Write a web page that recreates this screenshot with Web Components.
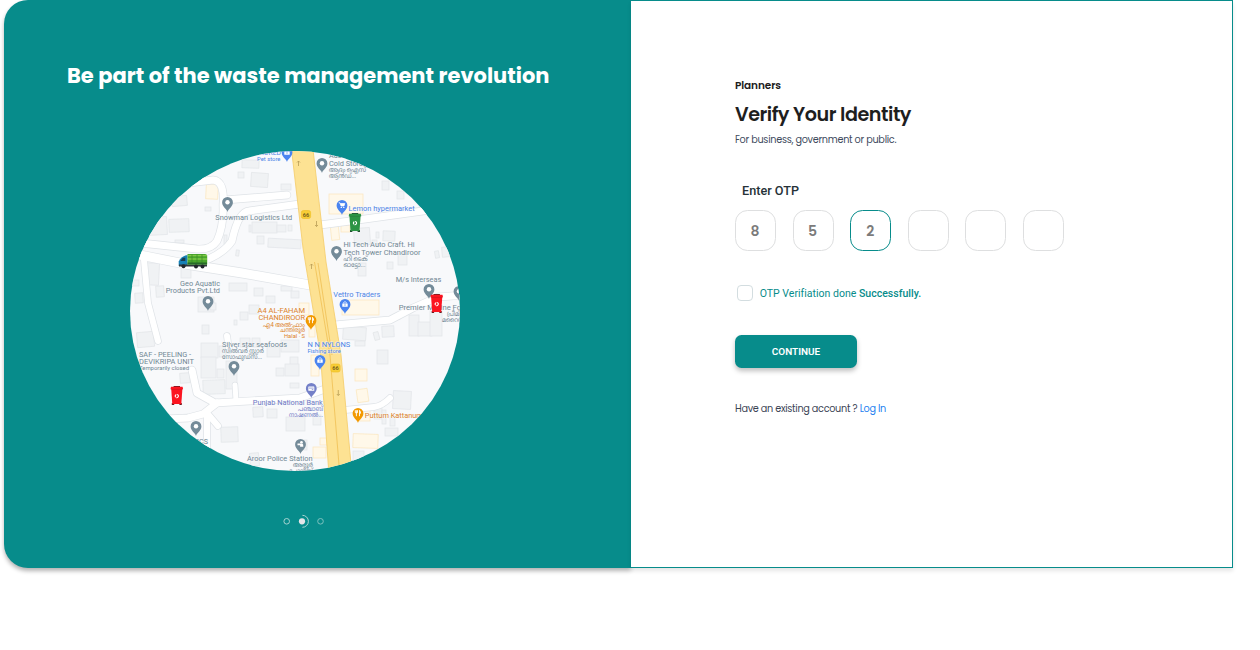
<!DOCTYPE html>
<html lang="en">
<head>
<meta charset="utf-8">
<title>Verify Your Identity</title>
<style>
body { margin: 0; background: #fff; font-family: Poppins, Inter, "Liberation Sans", sans-serif; }
</style>
</head>
<body>
<verify-page></verify-page>
<script>
const define = (name, html, setup) => {
  customElements.define(name, class extends HTMLElement {
    connectedCallback() {
      if (this.shadowRoot) return;
      const root = this.attachShadow({ mode: "open" });
      const t = document.createElement("template");
      t.innerHTML = typeof html === "function" ? html(this) : html;
      root.append(t.content.cloneNode(true));
      if (setup) setup(this, root);
    }
  });
};

/* A single line of text that fills a given width: by its size, or with the "track" attribute by letter-spacing only. */
define("fit-text", `<style>
  :host { display: block; white-space: nowrap; }
  span { display: inline-block; }
</style><span><slot></slot></span>`, (el, root) => {
  const s = root.querySelector("span");
  const target = +el.getAttribute("width");
  if (!el.hasAttribute("track")) {
    const size = parseFloat(getComputedStyle(s).fontSize);
    s.style.fontSize = (size * target / s.getBoundingClientRect().width).toFixed(2) + "px";
  }
  const n = el.textContent.length - 1;
  s.style.letterSpacing = ((target - s.getBoundingClientRect().width) / n).toFixed(3) + "px";
});

const roads = [
  ["M135 243L150 244L197 249Q211 250 217 241Q224 225 223 205Q225 181 213 180L180 184", 7],
  ["M225 200L287 195", 7],
  ["M195 264Q222 256 232 241Q238 212 249 211L300 204", 7],
  ["M135 254L145 256L185 264L242 273L310 285", 9],
  ["M320 225L365 219L430 210", 7],
  ["M335 325L390 320L413 308L438 297L465 295", 7],
  ["M144 260L148 303L158 341", 6],
  ["M192 370L197 393L215 403L300 398L325 389", 7],
  ["M165 419L188 418L203 414L217 403", 7],
  ["M207 412L207 450", 6],
  ["M207 413L218 426", 6],
  ["M235 385L236 401", 5],
  ["M345 410L374 407Q382 406 390 398", 6],
  ["M227 336L229 350", 6]
];
/* x, y, width, height, rotation */
const blocks = [
  [242,160,17,8,2],[238,172,6,6,0],[251,173,17,14,4],[281,184,10,6,0],[205,207,6,4,0],[172,196,15,10,-5],
  [169,219,20,13,-2],[145,217,22,18,-3],[175,240,9,3,0],[252,222,25,11,0],[277,225,9,7,0],[288,225,4,6,0],
  [257,236,7,8,0],[268,239,33,9,3],[224,235,3,10,0],[236,250,3,6,8],[249,225,2,7,0],
  [144,263,15,22,3],[181,268,10,10,0],[131,280,8,6,0],[135,293,8,10,-4],[156,286,8,11,-4],[198,297,16,15,0],[210,303,6,7,0],
  [229,283,18,8,0],[254,288,9,8,0],[266,296,9,7,0],[281,286,11,5,0],[291,291,8,7,0],[240,312,8,8,0],[249,305,10,9,0],[234,320,3,5,0],
  [202,325,7,9,0],[137,332,17,15,-5],[201,343,17,15,0],[219,346,7,11,0],[240,338,10,9,0],[252,338,8,9,0],[267,347,13,10,0],[281,340,18,12,0],[290,357,8,14,0],
  [180,373,10,10,-4],[201,357,15,21,0],[203,380,22,14,-2],[226,361,11,28,0],[217,369,7,9,0],[276,368,8,8,0],[285,364,14,12,0],[290,383,9,5,0],
  [253,407,10,10,-3],[267,409,10,9,0],[286,417,19,14,0],[221,427,17,15,-2],[250,453,9,13,-5],[313,415,8,10,0],[299,440,8,10,0],
  [382,181,7,9,0],[397,191,7,8,0],[383,231,12,10,2],[376,232,3,6,0],[354,228,16,17,-4],[372,240,5,6,0],[435,251,4,7,-10],[442,247,7,10,-5],
  [358,263,8,13,0],[398,254,9,11,0],[387,262,6,7,0],[343,327,23,13,4],[355,341,10,5,0],[374,332,5,8,-15],[382,326,12,11,-3],
  [377,350,11,14,0],[409,315,10,21,0],[418,322,14,14,0],[430,311,12,25,0],[393,391,18,18,3],[374,408,8,11,0],[382,410,4,14,0],[390,416,5,10,0],[385,428,13,8,0],[395,314,5,5,0],[353,451,11,10,0]
];
const shops = [
  [206,184,12,15,3],[329,194,34,20,0],[331,226,8,14,-6],[341,225,9,7,0],[351,223,8,6,0],[342,300,37,15,0],[299,303,10,12,0],
  [309,325,6,12,0],[311,355,8,21,0],[355,369,12,12,0],[357,389,11,13,-8],[353,434,25,14,2],[320,438,8,7,0],[313,447,13,11,0],[358,410,12,11,0]
];
/* x, y (tip), colour, glyph */
const S = "#748b99", B = "#4a84f0", O = "#f29900", P = "#7480c8";
const pins = [
  [227.5,212,S,"dot"],[322,173,S,"dot"],[336.5,261,S,"dot"],[208,311,S,"dot"],[429,299,S,"dot"],[459,301,S,"dot"],
  [234,376,S,"dot"],[196,436,S,"dot"],[300.5,454,S,"police"],[287,162,B,"bag"],[342,215,B,"cart"],[345,314,B,"bag"],
  [320,370,B,"bag"],[311,330,O,"fork"],[358,423,O,"fork"],[311.3,398,P,"bank"]
];
const glyph = {
  dot: `<circle cy="-9.7" r="2.2" fill="#fff"/>`,
  bag: `<path d="M-2.7 -10.6H2.7V-7.2H-2.7Z" fill="#fff"/><path d="M-1.4 -10.6V-11.5Q0 -13.2 1.4 -11.5V-10.6" fill="none" stroke="#fff" stroke-width=".8"/><path d="M-1 -9.3Q0 -8 1 -9.3" fill="none" stroke="#4a80e8" stroke-width=".6"/>`,
  cart: `<path d="M-3.3 -12.3H-2.2L-1 -9H2L2.8 -11.5H-1.8" fill="#fff" stroke="#fff" stroke-width=".7"/><circle cx="-.7" cy="-7.6" r=".7" fill="#fff"/><circle cx="1.8" cy="-7.6" r=".7" fill="#fff"/>`,
  fork: `<path d="M-1.6 -12.8V-6.8M-2.7 -12.8V-10.3H-.5V-12.8M1.5 -6.8V-12.7Q2.6 -12 2.6 -9.7H1.5" fill="none" stroke="#fff" stroke-width=".9"/>`,
  bank: `<rect x="-3" y="-11.6" width="6" height="4.4" rx=".5" fill="#fff"/><path d="M-2.4 -9.9H2.4M.5 -8.5H2" stroke="#7480c8" stroke-width=".7"/>`,
  police: `<circle cx="1" cy="-11.8" r="1.3" fill="#fff"/><path d="M-3 -10.4H1.8Q3 -10 2.8 -7.2H-.4V-8.8H-3Z" fill="#fff"/>`
};
const G = "#708793", BT = "#4c83e6", OT = "#dc8228", PT = "#6c78c4";
/* text, left, baseline, width, size, colour */
const labels = [
  ["SHORED",255,155,26,7.2,BT],["Pet store",257,160.5,23.5,5.9,BT],
  ["Snowman Logistics Ltd",215.3,220,77,7.6,G],
  ["Aadam Ice",329,158.3,34,7.6,G],["Cold Storage",329,165.5,42,7.6,G],["ആദം ഐസ്",329,172,37,6.8,G],["ആൻഡ്...",329,178,27,6.8,G],
  ["Lemon hypermarket",348.6,210.5,66,7.6,BT],
  ["Hi Tech Auto Craft. Hi",343.5,247,71,7.6,G],["Tech Tower Chandiroor",343.5,254.5,77,7.6,G],["ഹി ടെക്",343.5,260.5,24,6.8,G],["ഓട്ടോ...",343.5,266.5,22,6.8,G],
  ["M/s Interseas",395.7,281.7,45.5,7.6,G],["Premier Marine Foods",398.7,309.8,75,7.6,G],["പ്രീമിയർ",447,316,24,6.6,G],["മറൈൻ",442,322,22,6.6,G],
  ["Vettro Traders",333.3,296.5,47,7.6,BT],
  ["Geo Aquatic",180,286,40,7.6,G],["Products Pvt.Ltd",165.7,293.3,54.3,7.6,G],
  ["A4 AL-FAHAM",257.5,312.7,47.5,7.6,OT],["CHANDIROOR",258.5,320,46.5,7.6,OT],["എ4 അൽ-ഫാം",263,326.5,42,6.4,OT],["ചന്തിരൂർ",280,332.3,25,6.4,OT],["Halal · S",284,338,21,5.6,OT],
  ["Silver star seafoods",222,346.6,65,7.4,G],["സിൽവർ സ്റ്റാർ",222,352.5,42,6.6,G],["സോഫുഡ്സ്...",222,358.5,40,6.6,G],
  ["SAF - PEELING -",139,356.6,52,7.5,G],["DEVIKRIPA UNIT",139,364,55,7.5,G],["Temporarily closed",139,370.3,50,5.9,G],
  ["N N NYLONS",307.4,347,42.8,7.3,BT],["Fishing store",307.4,352.8,33.4,6,BT],
  ["Punjab National Bank",252.8,405.2,70,7.6,PT],["പഞ്ചാബ്",298,411,25,6.4,PT],["നാഷണൽ...",289,417,34,6.4,PT],
  ["Puttum Kattanum",364.8,418,58,7.6,OT],["ABCS",190,444,18,7.4,G],
  ["Aroor Police Station",247,461.3,65.5,7.6,G],["അരൂർ",293,467,20,6.4,G],["പോലീസ്",289,472.5,24,6.4,G]
];
const rects = (a, f, s) => a.map(([x,y,w,h,r]) => `<rect x="${x}" y="${y}" width="${w}" height="${h}" transform="rotate(${r} ${x+w/2} ${y+h/2})" fill="${f}" stroke="${s}" stroke-width=".7"/>`).join("");
const bin = (x, y, c, d) => `<g transform="translate(${x} ${y})"><path d="M-5 7.6H-2.6V9.4H-5ZM2.6 7.6H5V9.4H2.6ZM-3.2 -9.6H3.2V-8H-3.2Z" fill="${d}"/><path d="M-5.6 -6.6L-4.5 8.6H4.5L5.6 -6.6Z" fill="${c}"/><path d="M-5.8 -8.8H5.8L6.3 -6.2H-6.3Z" fill="${c}"/><path d="M-5.7 -6.1H5.7" stroke="${d}" stroke-opacity=".4" stroke-width=".5"/><circle cy=".6" r="1.6" fill="none" stroke="#fff" stroke-width="1.1" stroke-dasharray="2.7 .65"/></g>`;
const badge = (x, y) => `<rect x="${x-4.6}" y="${y-4}" width="9.2" height="8" rx="2" fill="#f7ce37" stroke="#eebd20" stroke-width=".6"/><text x="${x}" y="${y+2}" font-size="5.6" font-weight="600" text-anchor="middle" fill="#6f5b1c">66</text>`;

define("city-map", () => `<style>
  :host { display: block; width: 330px; height: 320px; border-radius: 50%; overflow: hidden; background: #f8f9fb; }
  svg { display: block; }
  text { font-family: Roboto, "Noto Sans Malayalam", "Noto Sans", sans-serif; }
</style>
<svg width="330" height="320" viewBox="130 151 330 320">
  ${rects(blocks, "#f0f2f4", "#e2e5e8")}${rects(shops, "#fff8e9", "#fbe6bd")}
  <g fill="none" stroke-linecap="round" stroke-linejoin="round">
    ${roads.map(([d,w]) => `<path d="${d}" stroke="#dfe3e7" stroke-width="${w+1.4}"/>`).join("")}
    ${roads.map(([d,w]) => `<path d="${d}" stroke="#fff" stroke-width="${w}"/>`).join("")}
  </g>
  <path d="M291 145L303 248L320.5 355L329 475H352L341 355L326 262L312.5 145Z" fill="#fde293" stroke="#f5cf70" stroke-width=".9"/>
  <path d="M314.5 262L330 355L339.5 471M318 263L332 355" fill="none" stroke="#f0c35a" stroke-width=".9"/>
  <g fill="none" stroke="#b99d55" stroke-width=".8"><path d="M298.5 166V161M297 162.5L298.5 161L300 162.5M316.5 221V226.5M315 225L316.5 226.5L318 225M311.5 269V264M310 265.5L311.5 264L313 265.5M338.3 390V395.5M336.8 394L338.3 395.5L339.8 394"/></g>
  ${badge(306,214.5)}${badge(335.5,368)}
  ${pins.map(([x,y,c,g]) => `<g transform="translate(${x} ${y})"><path d="M0 0C-.8 -3.2 -5.4 -5 -5.4 -9.7A5.4 5.4 0 0 1 5.4 -9.7C5.4 -5 .8 -3.2 0 0Z" fill="${c}"/>${glyph[g]}</g>`).join("")}
  ${labels.map(([t,x,y,w,s,c]) => `<text x="${x}" y="${y}" textLength="${w}" lengthAdjust="spacingAndGlyphs" font-size="${s}" fill="${c}" stroke="#f8f9fb" stroke-width="1.2" stroke-opacity=".6" paint-order="stroke">${t}</text>`).join("")}
  ${bin(355,222.5,"#2c9444","#234c30")}${bin(436.7,303.5,"#fb1420","#6a1a20")}${bin(176.8,395.5,"#fb1420","#6a1a20")}
  <g transform="translate(178 253)">
    <path d="M.7 8.5Q3 3.5 8 2.2H9.5V13H.7Z" fill="#1680b6"/><path d="M2.3 8L4.8 4.7H7.3V8Z" fill="#173c50"/><path d="M1 11.5H29V13.5H1Z" fill="#30373d"/>
    <path d="M9.5 1H27Q29.5 1 29.2 4V11.5H9.5Z" fill="#4aa62d"/><path d="M10 2.6H29M10 6H29" stroke="#7fca45" stroke-width="1.3"/><path d="M14 1.5V11M19 1.5V11M24 1.5V11" stroke="#398826" stroke-width=".7"/>
    <path d="M9.5 9.5H29V11.5H9.5Z" fill="#276b29"/><circle cx="5.5" cy="13.3" r="2" fill="#20262b"/><circle cx="18" cy="13.5" r="2" fill="#20262b"/><circle cx="24.5" cy="13.5" r="2" fill="#20262b"/>
  </g>
</svg>`);

define("slide-dots", `<style>:host { display: block; height: 16px; } svg { display: block; }</style>
<svg width="46" height="16" fill="none" stroke="#a6d3d1" stroke-width="1"><circle cx="5.7" cy="8.3" r="2.8"/><circle cx="21" cy="8.3" r="3.1" fill="#e4e5e8" stroke="none"/><path d="M21.4 2.3A6 6 0 0 1 21.4 14.3"/><circle cx="39.5" cy="8.3" r="2.8" stroke="#7dc2bf"/></svg>`);

define("promo-panel", `<style>
  :host { box-sizing: border-box; display: flex; flex-direction: column; width: 627px; height: 568px; background: #078c8b; border-radius: 24px 0 0 24px; box-shadow: 0 3px 4px rgba(0,0,0,.3); }
  .title { margin: 59px 0 0 63px; height: 34px; font: 700 21.5px/34px Poppins, Inter, sans-serif; color: #fff; }
  city-map { margin: 58px 0 0 126px; }
  slide-dots { margin: 42px 0 0 277px; }
</style>
<fit-text class="title" width="482.5">Be part of the waste management revolution</fit-text>
<city-map></city-map><slide-dots></slide-dots>`);

define("otp-cell", `<style>
  :host { box-sizing: border-box; width: 41px; height: 41.4px; display: flex; align-items: center; justify-content: center; border: 1px solid #dedfe0; border-radius: 12.5px; font: 600 14px/20px Poppins, Inter, sans-serif; color: #7b7b7b; background: #fff; padding: 1px 1px 0 0; }
  :host([active]) { border-color: #078c8b; }
</style><slot></slot>`);

define("otp-form", `<style>
  :host { box-sizing: border-box; display: flex; flex-direction: column; width: 602px; height: 568px; padding: 76px 0 0 104px; border: 1px solid #078c8b; border-left: 0; background: #fff; box-shadow: 0 3px 4px rgba(0,0,0,.1); }
  fit-text { flex: none; }
  .role { height: 17px; font: 600 10.5px/17px Poppins, Inter, sans-serif; color: #1c1c1c; }
  .head { height: 30px; margin-top: 6px; font: 600 19.2px/30px Poppins, Inter, sans-serif; color: #1e1e1e; }
  .sub { height: 16px; margin-top: 2px; font: 400 9.7px/16px Poppins, Inter, sans-serif; color: #404a5d; }
  .label { height: 18px; margin: 34px 0 0 7px; font: 500 12.3px/18px Roboto, sans-serif; color: #263238; }
  .cells { display: flex; gap: 16.6px; margin-top: 9.6px; }
  .check { display: flex; align-items: center; height: 18px; margin-top: 33.4px; padding-left: 1.5px; color: #078c8b; font: 400 10.8px/18px Roboto, sans-serif; }
  .check fit-text { padding-top: 1.4px; }
  .box { box-sizing: border-box; width: 16px; height: 16px; margin-right: 7.2px; border: 1px solid #d3dde0; border-radius: 4px; }
  b { font-weight: 500; }
  button { display: flex; align-items: center; justify-content: center; width: 122px; height: 33px; margin: 33px 0 0; padding: 1px 0 0; border: 0; border-radius: 6.5px; background: #078c8b; color: #fff; box-shadow: 0 3px 5px rgba(0,0,0,.25); font: 600 9.8px/14px Roboto, sans-serif; }
  .login { display: flex; margin-top: 33px; gap: 2.5px; font: 400 9.7px/16px Poppins, Inter, sans-serif; color: #3a4354; }
  a { color: #1e80f0; }
</style>
<fit-text class="role" track width="46">Planners</fit-text>
<fit-text class="head" track width="176.5">Verify Your Identity</fit-text>
<fit-text class="sub" track width="161.5">For business, government or public.</fit-text>
<fit-text class="label" width="57">Enter OTP</fit-text>
<div class="cells"><otp-cell>8</otp-cell><otp-cell>5</otp-cell><otp-cell active>2</otp-cell><otp-cell></otp-cell><otp-cell></otp-cell><otp-cell></otp-cell></div>
<div class="check"><span class="box"></span><fit-text width="161">OTP Verifiation done <b>Successfully.</b></fit-text></div>
<button><fit-text width="48.5">CONTINUE</fit-text></button>
<div class="login"><fit-text track width="122.5">Have an existing account ?</fit-text><a><fit-text track width="26.5">Log In</fit-text></a></div>`);

define("verify-page", `<style>:host { display: flex; padding-left: 4px; height: 650px; box-sizing: border-box; align-items: flex-start; }</style><promo-panel></promo-panel><otp-form></otp-form>`);
</script>
</body>
</html>
